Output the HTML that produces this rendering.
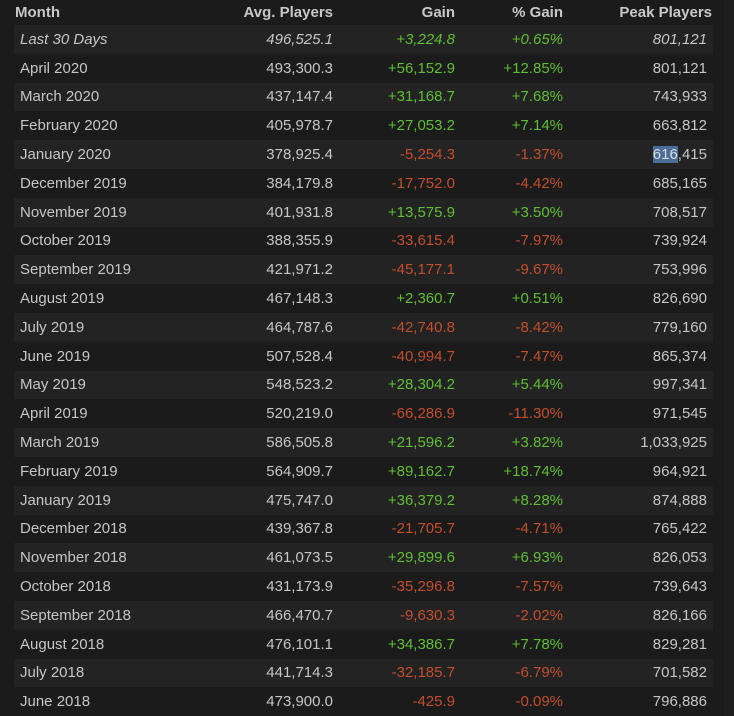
<!DOCTYPE html>
<html><head><style>
body{margin:0;background:#1b1b1b;width:734px;height:716px;overflow:hidden;font-family:"Liberation Sans",sans-serif;}
.sb{position:absolute;left:724px;top:0;width:10px;height:716px;background:#1f1f1f}
table{position:absolute;left:14px;top:0;width:699px;border-collapse:collapse;table-layout:fixed;font-size:15px;color:#c6c6c6}
th{height:25px;font-weight:bold;color:#c8c8c8;text-align:right;padding:0;vertical-align:middle}
td{height:28.8px;padding:0;text-align:right;vertical-align:middle}
th:first-child{text-align:left;padding-left:1px}
td:first-child{text-align:left;padding-left:6px}
td:last-child{padding-right:6px}
th:last-child{padding-right:1px}
tr:nth-child(even) td{background:#232323}
.g{color:#5fbf2f}.r{color:#c24e2a}
i{font-style:italic}
.h{background:#4a6d9a;color:#ddd}
</style></head><body><div class="sb"></div>
<table>
<colgroup><col style="width:190px"><col style="width:129px"><col style="width:122px"><col style="width:108px"><col style="width:150px"></colgroup>
<tr><th>Month</th><th>Avg. Players</th><th>Gain</th><th>% Gain</th><th>Peak Players</th></tr>
<tr><td><i>Last 30 Days</i></td><td><i>496,525.1</i></td><td class="g"><i>+3,224.8</i></td><td class="g"><i>+0.65%</i></td><td><i>801,121</i></td></tr>
<tr><td>April 2020</td><td>493,300.3</td><td class="g">+56,152.9</td><td class="g">+12.85%</td><td>801,121</td></tr>
<tr><td>March 2020</td><td>437,147.4</td><td class="g">+31,168.7</td><td class="g">+7.68%</td><td>743,933</td></tr>
<tr><td>February 2020</td><td>405,978.7</td><td class="g">+27,053.2</td><td class="g">+7.14%</td><td>663,812</td></tr>
<tr><td>January 2020</td><td>378,925.4</td><td class="r">-5,254.3</td><td class="r">-1.37%</td><td><span class="h">616</span>,415</td></tr>
<tr><td>December 2019</td><td>384,179.8</td><td class="r">-17,752.0</td><td class="r">-4.42%</td><td>685,165</td></tr>
<tr><td>November 2019</td><td>401,931.8</td><td class="g">+13,575.9</td><td class="g">+3.50%</td><td>708,517</td></tr>
<tr><td>October 2019</td><td>388,355.9</td><td class="r">-33,615.4</td><td class="r">-7.97%</td><td>739,924</td></tr>
<tr><td>September 2019</td><td>421,971.2</td><td class="r">-45,177.1</td><td class="r">-9.67%</td><td>753,996</td></tr>
<tr><td>August 2019</td><td>467,148.3</td><td class="g">+2,360.7</td><td class="g">+0.51%</td><td>826,690</td></tr>
<tr><td>July 2019</td><td>464,787.6</td><td class="r">-42,740.8</td><td class="r">-8.42%</td><td>779,160</td></tr>
<tr><td>June 2019</td><td>507,528.4</td><td class="r">-40,994.7</td><td class="r">-7.47%</td><td>865,374</td></tr>
<tr><td>May 2019</td><td>548,523.2</td><td class="g">+28,304.2</td><td class="g">+5.44%</td><td>997,341</td></tr>
<tr><td>April 2019</td><td>520,219.0</td><td class="r">-66,286.9</td><td class="r">-11.30%</td><td>971,545</td></tr>
<tr><td>March 2019</td><td>586,505.8</td><td class="g">+21,596.2</td><td class="g">+3.82%</td><td>1,033,925</td></tr>
<tr><td>February 2019</td><td>564,909.7</td><td class="g">+89,162.7</td><td class="g">+18.74%</td><td>964,921</td></tr>
<tr><td>January 2019</td><td>475,747.0</td><td class="g">+36,379.2</td><td class="g">+8.28%</td><td>874,888</td></tr>
<tr><td>December 2018</td><td>439,367.8</td><td class="r">-21,705.7</td><td class="r">-4.71%</td><td>765,422</td></tr>
<tr><td>November 2018</td><td>461,073.5</td><td class="g">+29,899.6</td><td class="g">+6.93%</td><td>826,053</td></tr>
<tr><td>October 2018</td><td>431,173.9</td><td class="r">-35,296.8</td><td class="r">-7.57%</td><td>739,643</td></tr>
<tr><td>September 2018</td><td>466,470.7</td><td class="r">-9,630.3</td><td class="r">-2.02%</td><td>826,166</td></tr>
<tr><td>August 2018</td><td>476,101.1</td><td class="g">+34,386.7</td><td class="g">+7.78%</td><td>829,281</td></tr>
<tr><td>July 2018</td><td>441,714.3</td><td class="r">-32,185.7</td><td class="r">-6.79%</td><td>701,582</td></tr>
<tr><td>June 2018</td><td>473,900.0</td><td class="r">-425.9</td><td class="r">-0.09%</td><td>796,886</td></tr>
</table>
</body></html>
